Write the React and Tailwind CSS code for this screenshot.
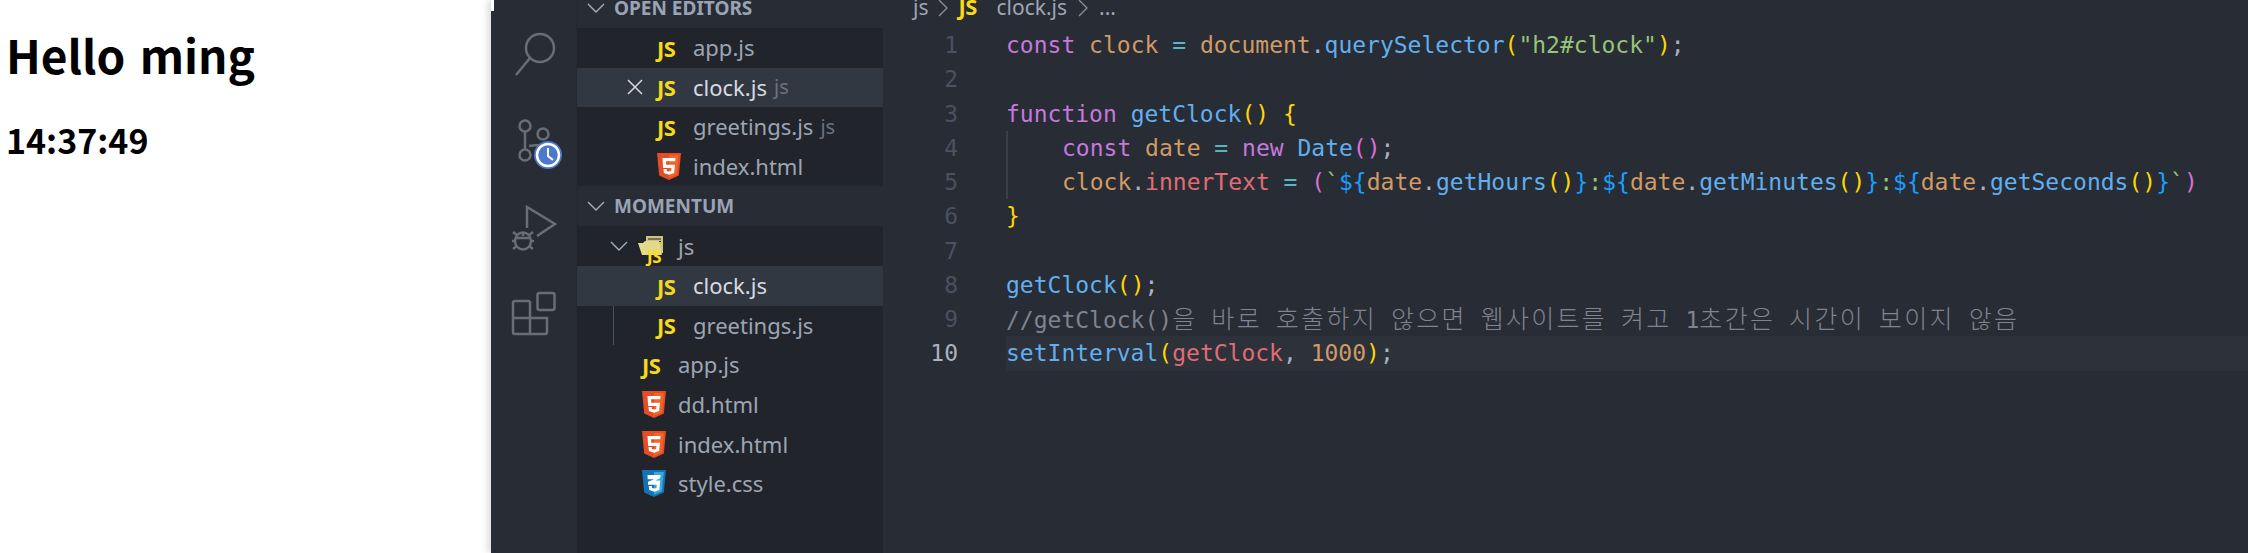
const mono = "font-['DejaVu_Sans_Mono','Noto_Sans_CJK_KR',monospace]";

function JsIcon({ small }) {
  return (
    <span className={small ? "font-['Open_Sans'] font-bold text-[17px] tracking-[-0.5px] text-[#ffd91c] leading-none" : "font-['Open_Sans'] font-bold text-[22px] tracking-[-0.5px] text-[#f6d91a] leading-none"}>
      JS
    </span>
  );
}

function Html5Icon() {
  return (
    <svg width="24" height="27" viewBox="0 0 24 27">
      <path d="M0 0h24l-2.200 22.500L12 27l-9.800-4.500z" fill="#e44d26" />
      <path d="M12 2v22.700l7.900-3.300L21.800 2z" fill="#f16529" />
      <path d="M5.500 5h13l-.3 3.300H9l.3 3.400h8.600l-.8 8.300-5.100 1.700-5.100-1.700-.4-3.900h3.200l.2 1.900 2.100.6 2.200-.6.3-3H6.100z" fill="#fff" />
    </svg>
  );
}

function Css3Icon() {
  return (
    <svg width="24" height="27" viewBox="0 0 24 27">
      <path d="M0 0h24l-2.200 22.500L12 27l-9.800-4.500z" fill="#1572b6" />
      <path d="M12 2v22.700l7.900-3.300L21.800 2z" fill="#33a9dc" />
      <path d="M5.500 5h13l-.3 3.300-5 2.300h5l-.8 9.400-5.100 1.700-5.100-1.700-.4-3.900h3.200l.2 1.900 2.100.6 2.200-.6.300-3.300H6.100l-.2-3 6-2.500H5.700z" fill="#fff" />
    </svg>
  );
}

function FolderIcon() {
  return (
    <span className="relative block w-[28px] h-[24px]">
      <svg width="26" height="20" viewBox="0 0 26 20" className="absolute left-0 top-0">
        <path d="M8 0h17v17H8z" fill="#cfc47a" />
        <path d="M10 3h13M10 5.500h13" stroke="#21252b" strokeWidth="1" />
        <path d="M0 7h5l2-2h14l3 14H4z" fill="#e2d98c" />
      </svg>
      <span className="absolute left-[9px] top-[9px]">
        <JsIcon small />
      </span>
    </span>
  );
}

function Chevron({ className }) {
  return (
    <svg width="18" height="10" viewBox="0 0 18 10" className={className}>
      <path d="M1 1l8 8 8-8" fill="none" stroke="#a6adba" strokeWidth="1.400" />
    </svg>
  );
}

function SectionHeader({ title }) {
  return (
    <div className="h-[40px] bg-[#282c34] flex items-center pl-[10px] shrink-0">
      <Chevron />
      <span className="ml-[9px] font-['Noto_Sans'] font-bold text-[19px] text-[#9aa3b5] uppercase">{title}</span>
    </div>
  );
}

function FileRow({ icon, name, hint, active, closable, indent, bright }) {
  return (
    <div className={active ? "h-[39.600px] flex items-center bg-[#323842] relative shrink-0" : "h-[39.600px] flex items-center relative shrink-0"}>
      <div style={{ width: indent }} className="shrink-0 flex justify-end pr-[14px]">
        {closable && (
          <svg width="16" height="16" viewBox="0 0 16 16">
            <path d="M1 1l14 14M15 1L1 15" stroke="#d7dae0" strokeWidth="1.500" />
          </svg>
        )}
      </div>
      <div className="w-[36px] shrink-0 flex items-center">{icon}</div>
      <span className={bright || active ? "font-['Noto_Sans'] text-[22px] text-[#d7dae0]" : "font-['Noto_Sans'] text-[22px] text-[#9da5b4]"}>{name}</span>
      {hint && <span className="ml-[7px] font-['Noto_Sans'] text-[20px] text-[#6b7280]">{hint}</span>}
    </div>
  );
}

function ActivityBar() {
  const c = "#696d75";
  return (
    <div className="w-[86px] shrink-0 bg-[#282c34] border-r border-[#252930] flex flex-col pt-[9px] pl-[14px] shadow-[-4px_0_6px_rgba(0,0,0,0.12)] z-10">
      <svg width="60" height="86" viewBox="505 9 60 86" fill="none" stroke={c} strokeWidth="2.500">
        <circle cx="540" cy="48" r="14" />
        <path d="M530 58l-14 17" />
      </svg>
      <svg width="60" height="86" viewBox="505 95 60 86" fill="none" stroke={c} strokeWidth="2.500">
        <circle cx="525" cy="126" r="5.500" />
        <circle cx="543" cy="134" r="5.500" />
        <circle cx="525" cy="155" r="5.500" />
        <path d="M525 132v17M529 146q6-1 14-1" />
        <circle cx="548" cy="155" r="14" fill="#4d78cc" stroke="none" />
        <circle cx="548" cy="155" r="11" fill="#4d78cc" stroke="#fff" strokeWidth="2.500" />
        <path d="M548 148v8l5 4" stroke="#fff" strokeWidth="2" />
      </svg>
      <svg width="60" height="86" viewBox="505 181 60 86" fill="none" stroke={c} strokeWidth="2.500">
        <path d="M527 228v-21l28 17-18 12" />
        <ellipse cx="523" cy="241" rx="8" ry="8.500" />
        <path d="M515 238h16M523 233v3M513 232l4 3M533 232l-4 3M512 241h4M530 241h4M513 249l4-3M533 249l-4-3" />
      </svg>
      <svg width="60" height="86" viewBox="505 267 60 86" fill="none" stroke={c} strokeWidth="2.500">
        <rect x="537.500" y="293" width="17" height="17" rx="2" />
        <path d="M530 301h-15a2 2 0 0 0-2 2v29a2 2 0 0 0 2 2h30a2 2 0 0 0 2-2v-14h-34M530 301v33" />
      </svg>
    </div>
  );
}

const P = "text-[#c678dd]";
const O = "text-[#d19a66]";
const B = "text-[#61afef]";
const Y = "text-[#ffd700]";
const M = "text-[#da70d6]";
const G = "text-[#98c379]";
const W = "text-[#abb2bf]";
const R = "text-[#e06c75]";
const T = "text-[#56b6c2]";
const D = "text-[#179fff]";
const C = "text-[#7f848e]";

const lines = [
  { tokens: [["const ", P], ["clock ", O], ["= ", T], ["document", O], [".", W], ["querySelector", B], ["(", Y], ['"h2#clock"', G], [")", Y], [";", W]] },
  { tokens: [] },
  { tokens: [["function ", P], ["getClock", B], ["()", Y], [" ", W], ["{", Y]] },
  { guide: true, tokens: [["const ", P], ["date ", O], ["= ", T], ["new ", P], ["Date", B], ["()", M], [";", W]] },
  {
    guide: true,
    tokens: [
      ["clock", O], [".", W], ["innerText ", R], ["= ", T], ["(", M], ["`", G], ["${", D], ["date", O], [".", W], ["getHours", B], ["()", Y], ["}", D],
      [":", G], ["${", D], ["date", O], [".", W], ["getMinutes", B], ["()", Y], ["}", D],
      [":", G], ["${", D], ["date", O], [".", W], ["getSeconds", B], ["()", Y], ["}", D], ["`", G], [")", M],
    ],
  },
  { tokens: [["}", Y]] },
  { tokens: [] },
  { tokens: [["getClock", B], ["()", Y], [";", W]] },
  { comment: true, tokens: [] },
  { tokens: [["setInterval", B], ["(", Y], ["getClock", R], [", ", W], ["1000", O], [")", Y], [";", W]] },
];

// hangul runs wider than the latin cells, so it gets its own size and spacing
function Hangul({ children }) {
  return <span className="font-['Noto_Sans_CJK_KR'] font-light text-[25px] leading-[30px] tracking-[2.300px]">{children}</span>;
}

function CommentLine() {
  return (
    <span className={C}>
      //getClock()<Hangul>을</Hangul> <Hangul>바로</Hangul> <Hangul>호출하지</Hangul> <Hangul>않으면</Hangul>{" "}
      <Hangul>웹사이트를</Hangul> <Hangul>켜고</Hangul> 1<Hangul>초간은</Hangul> <Hangul>시간이</Hangul>{" "}
      <Hangul>보이지</Hangul> <Hangul>않음</Hangul>
    </span>
  );
}

function CodeLine({ line, number }) {
  const current = number === 10;
  return (
    <div className="h-[34.250px] flex shrink-0">
      <div className={current ? "w-[75px] shrink-0 text-right text-[#abb2bf] leading-[34px]" : "w-[75px] shrink-0 text-right text-[#495162] leading-[34px]"}>{number}</div>
      <div className="w-[48px] shrink-0" />
      <div className={current ? "flex-1 flex bg-[#2c313a] leading-[34px] whitespace-pre" : "flex-1 flex leading-[34px] whitespace-pre"}>
        {line.guide && <div className="w-[56px] shrink-0 border-l-2 border-[#3b4048]" />}
        {line.comment ? (
          <CommentLine />
        ) : (
          <span>
            {line.tokens.map(([text, color], i) => (
              <span key={i} className={color}>{text}</span>
            ))}
          </span>
        )}
      </div>
    </div>
  );
}

export default function App() {
  return (
    <div className="flex w-[2248px] h-[553px] overflow-hidden bg-white">
      {/* page preview */}
      <div className="w-[491px] shrink-0 bg-white text-black pl-[6px] font-['Noto_Sans_CJK_KR','Noto_Sans',sans-serif]">
        <h1 className="font-bold text-[46px] leading-[56px] mt-[26px] [word-spacing:4px]">Hello ming</h1>
        <h2 className="font-bold text-[34px] leading-[42px] mt-[37px]">14:37:49</h2>
      </div>

      <div className="relative flex flex-1 min-w-0">
        <div className="absolute left-0 top-0 w-[3px] h-[11px] bg-white z-20" />
        <ActivityBar />

        {/* explorer */}
        <div className="w-[306px] shrink-0 bg-[#21252b] flex flex-col -mt-[12px] relative">
          <SectionHeader title="Open Editors" />
          <FileRow indent={80} icon={<JsIcon />} name="app.js" />
          <FileRow indent={80} icon={<JsIcon />} name="clock.js" hint="js" active closable />
          <FileRow indent={80} icon={<JsIcon />} name="greetings.js" hint="js" />
          <FileRow indent={80} icon={<Html5Icon />} name="index.html" />
          <SectionHeader title="Momentum" />
          <div className="h-[39.600px] flex items-center shrink-0 pl-[33px]">
            <Chevron />
            <span className="ml-[10px] mt-[4px]"><FolderIcon /></span>
            <span className="ml-[12px] font-['Noto_Sans'] text-[22px] text-[#9da5b4]">js</span>
          </div>
          <div className="ml-[36px] border-l border-[#4b5263] shrink-0 flex flex-col">
            <div className="-ml-[37px] flex flex-col">
              <FileRow indent={80} icon={<JsIcon />} name="clock.js" active />
              <FileRow indent={80} icon={<JsIcon />} name="greetings.js" />
            </div>
          </div>
          <FileRow indent={65} icon={<JsIcon />} name="app.js" />
          <FileRow indent={65} icon={<Html5Icon />} name="dd.html" />
          <FileRow indent={65} icon={<Html5Icon />} name="index.html" />
          <FileRow indent={65} icon={<Css3Icon />} name="style.css" />
        </div>

        {/* editor */}
        <div className={"flex-1 min-w-0 bg-[#282c34] flex flex-col -mt-[12px] text-[23px] " + mono}>
          <div className="h-[40px] shrink-0 flex items-center pl-[30px] font-['Noto_Sans'] text-[21px] text-[#9da5b4]">
            <span>js</span>
            <svg width="10" height="18" viewBox="0 0 10 18" className="mx-[10px]">
              <path d="M1 1l8 8-8 8" fill="none" stroke="#8b919c" strokeWidth="1.300" />
            </svg>
            <span className="mr-[14px] w-[24px]"><JsIcon /></span>
            <span>clock.js</span>
            <svg width="10" height="18" viewBox="0 0 10 18" className="mx-[11px]">
              <path d="M1 1l8 8-8 8" fill="none" stroke="#8b919c" strokeWidth="1.300" />
            </svg>
            <span>...</span>
          </div>
          {lines.map((line, i) => (
            <CodeLine key={i} line={line} number={i + 1} />
          ))}
        </div>
      </div>
    </div>
  );
}
